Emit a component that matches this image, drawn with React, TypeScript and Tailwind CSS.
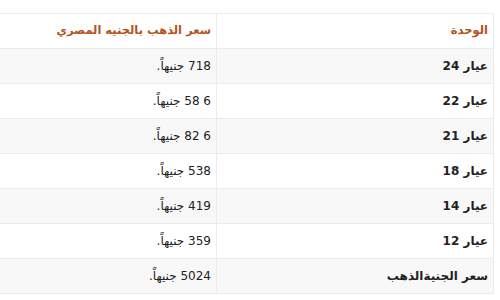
const rows = [
  { unit: "عيار 24", price: "718 جنيهاً." },
  { unit: "عيار 22", price: "6 58 جنيهاً." },
  { unit: "عيار 21", price: "6 82 جنيهاً." },
  { unit: "عيار 18", price: "538 جنيهاً." },
  { unit: "عيار 14", price: "419 جنيهاً." },
  { unit: "عيار 12", price: "359 جنيهاً." },
  { unit: "سعر الجنيةالذهب", price: "5024 جنيهاً." },
];

const App = () => {
  return (
    <div
      dir="rtl"
      className="w-[500px] h-[300px] overflow-hidden bg-white pt-[13px] font-['DejaVu_Sans',sans-serif] text-[12px] text-[#222]"
    >
      <table className="mr-[6px] w-[494px] border-collapse table-fixed">
        <colgroup>
          <col className="w-[277px]" />
          <col className="w-[217px]" />
        </colgroup>
        <thead>
          <tr className="h-[35px] bg-white">
            <th className="border border-[#ececec] pr-[5px] pl-[7px] text-right font-bold text-[11.5px] text-[#b4541c]">
              الوحدة
            </th>
            <th className="border border-[#ececec] border-l-0 pr-[5px] pl-[7px] text-right font-bold text-[11.5px] text-[#b4541c]">
              سعر الذهب بالجنيه المصري
            </th>
          </tr>
        </thead>
        <tbody>
          {rows.map((r, i) => (
            <tr
              key={r.unit}
              className={i % 2 === 0 ? "h-[35px] bg-[#f8f8f8]" : "h-[35px] bg-white"}
            >
              <td className="border border-[#ececec] pr-[5px] pl-[7px] font-bold">{r.unit}</td>
              <td className="border border-[#ececec] border-l-0 pr-[5px] pl-[7px]">{r.price}</td>
            </tr>
          ))}
        </tbody>
      </table>
    </div>
  );
};

export default App;
